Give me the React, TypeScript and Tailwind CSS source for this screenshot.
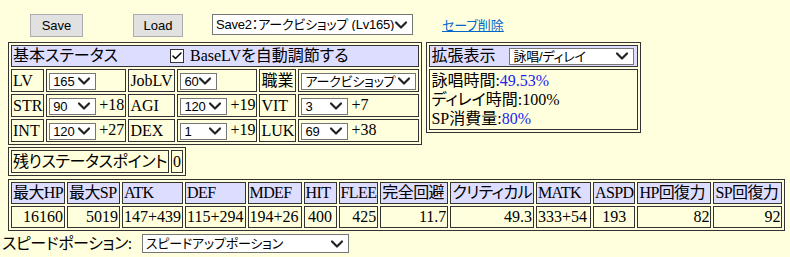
import { ChevronDown, Check } from "lucide-react";

const serif =
  "font-['Liberation_Serif','Noto_Sans_CJK_JP',serif] [font-feature-settings:'palt']";
const ui =
  "font-['Liberation_Sans','Noto_Sans_CJK_JP',sans-serif] [font-feature-settings:'palt']";

function Select({ value, className }: { value: string; className: string }) {
  return (
    <span className={`relative inline-block align-middle ${className}`}>
      <select
        defaultValue={value}
        className={`appearance-none block w-full h-full border border-[#767676] bg-white pl-[3px] pr-[15px] text-[13px] leading-none tracking-[-0.2px] text-black outline-none ${ui}`}
      >
        <option>{value}</option>
      </select>
      <ChevronDown
        className="absolute right-[2px] top-1/2 -translate-y-1/2 pointer-events-none text-[#222]"
        size={20}
        strokeWidth={2.6}
      />
    </span>
  );
}

const cell = "border border-[#333] p-px whitespace-nowrap";
const head = "border border-[#333] p-px whitespace-nowrap bg-[#ddddff]";
const table = "border-separate border-spacing-[2px] border border-[#333]";

function StatRow({ items }: { items: [string, string, string][] }) {
  return (
    <tr className="h-[23px]">
      {items.map(([label, val, bonus]) => (
        <>
          <td key={label} className={cell}>
            {label}
          </td>
          <td key={label + "v"} className={cell}>
            <Select value={val} className="ml-[1px] w-[47px] h-[17px]" />
            {bonus && <span className="ml-[3px]">{bonus}</span>}
          </td>
        </>
      ))}
    </tr>
  );
}

export default function App() {
  const stats = [
    ["最大HP", "16160", "w-[54px]", "text-right"],
    ["最大SP", "5019", "w-[53px]", "text-right"],
    ["ATK", "147+439", "w-[60px]", "text-left"],
    ["DEF", "115+294", "w-[60px]", "text-left"],
    ["MDEF", "194+26", "w-[54px]", "text-left"],
    ["HIT", "400", "w-[33px]", "text-center"],
    ["FLEE", "425", "w-[39px]", "text-right"],
    ["完全回避", "11.7", "w-[68px]", "text-right"],
    ["クリティカル", "49.3", "w-[83px]", "text-right"],
    ["MATK", "333+54", "w-[55px]", "text-left"],
    ["ASPD", "193", "w-[42px]", "text-center"],
    ["HP回復力", "82", "w-[74px]", "text-right"],
    ["SP回復力", "92", "w-[69px]", "text-right"],
  ];

  return (
    <div className={`w-[790px] h-[257px] bg-[#ffffdd] text-black text-[16px] leading-[18px] ${serif}`}>
      {/* top bar */}
      <div className="flex items-start pt-[14px] h-[42px]">
        <button
          className={`ml-[30px] w-[53px] h-[23px] border border-[#adadad] bg-[#e1e1e1] text-[13px] ${ui}`}
        >
          Save
        </button>
        <button
          className={`ml-[50px] w-[50px] h-[23px] border border-[#adadad] bg-[#e1e1e1] text-[13px] ${ui}`}
        >
          Load
        </button>
        <Select value="Save2：アークビショップ (Lv165)" className="ml-[29px] w-[201px] h-[21px]" />
        <a href="#" className={`ml-[29px] mt-[5px] text-[13px] leading-none text-[#0066cc] underline ${ui}`}>
          セーブ削除
        </a>
      </div>

      {/* status + extended */}
      <div className="flex items-start pl-[8px]">
        <div>
          <table className={table}>
            <tbody>
              <tr className="h-[22px]">
                <td colSpan={6} className={head}>
                  <div className="flex items-center">
                    <span className="w-[157px]">基本ステータス</span>
                    <span className="w-[14px] h-[14px] border border-[#333] bg-white flex items-center justify-center">
                      <Check size={12} strokeWidth={3} />
                    </span>
                    <span className="ml-[6px]">BaseLVを自動調節する</span>
                  </div>
                </td>
              </tr>
              <tr className="h-[23px]">
                <td className={`${cell} w-[33px]`}>LV</td>
                <td className={`${cell} w-[79px]`}>
                  <Select value="165" className="ml-[1px] w-[47px] h-[17px]" />
                </td>
                <td className={`${cell} w-[47px]`}>JobLV</td>
                <td className={`${cell} w-[80px]`}>
                  <Select value="60" className="ml-[1px] w-[37px] h-[17px]" />
                </td>
                <td className={`${cell} w-[37px]`}>職業</td>
                <td className={`${cell} w-[121px]`}>
                  <Select value="アークビショップ" className="ml-[1px] w-[115px] h-[17px]" />
                </td>
              </tr>
              <StatRow
                items={[
                  ["STR", "90", "+18"],
                  ["AGI", "120", "+19"],
                  ["VIT", "3", "+7"],
                ]}
              />
              <StatRow
                items={[
                  ["INT", "120", "+27"],
                  ["DEX", "1", "+19"],
                  ["LUK", "69", "+38"],
                ]}
              />
            </tbody>
          </table>
          <table className={`${table} mt-[2px]`}>
            <tbody>
              <tr className="h-[23px]">
                <td className={`${cell} w-[154px] tracking-[-0.4px]`}>残りステータスポイント</td>
                <td className={`${cell} w-[11px]`}>0</td>
              </tr>
            </tbody>
          </table>
        </div>

        <table className={`${table} ml-[4px]`}>
          <tbody>
            <tr className="h-[22px]">
              <td className={`${head} w-[209px]`}>
                <div className="flex items-center">
                  <span className="w-[78px]">拡張表示</span>
                  <Select value="詠唱/ディレイ" className="w-[125px] h-[17px]" />
                </div>
              </td>
            </tr>
            <tr className="h-[59px]">
              <td className={`${cell} align-top pt-[2px]`}>
                <div>
                  詠唱時間:<span className="text-[#2222ee]">49.53%</span>
                </div>
                <div className="mt-[1px]">ディレイ時間:100%</div>
                <div className="mt-[1px]">
                  SP消費量:<span className="text-[#2222ee]">80%</span>
                </div>
              </td>
            </tr>
          </tbody>
        </table>
      </div>

      {/* derived stats */}
      <div className="pl-[8px] mt-[3px]">
        <table className={table}>
          <tbody>
            <tr className="h-[20px]">
              {stats.map(([label, , w]) => (
                <td key={label} className={`${head} ${w} tracking-[-0.6px]`}>
                  {label}
                </td>
              ))}
            </tr>
            <tr className="h-[22px]">
              {stats.map(([label, value, , align]) => (
                <td key={label} className={`${cell} ${align}`}>
                  {value}
                </td>
              ))}
            </tr>
          </tbody>
        </table>
      </div>

      <div className="flex items-center pl-[2px] mt-[3px]">
        <span className="tracking-[-0.4px]">スピードポーション:</span>
        <Select value="スピードアップポーション" className="ml-[10px] w-[207px] h-[19px]" />
      </div>
    </div>
  );
}
